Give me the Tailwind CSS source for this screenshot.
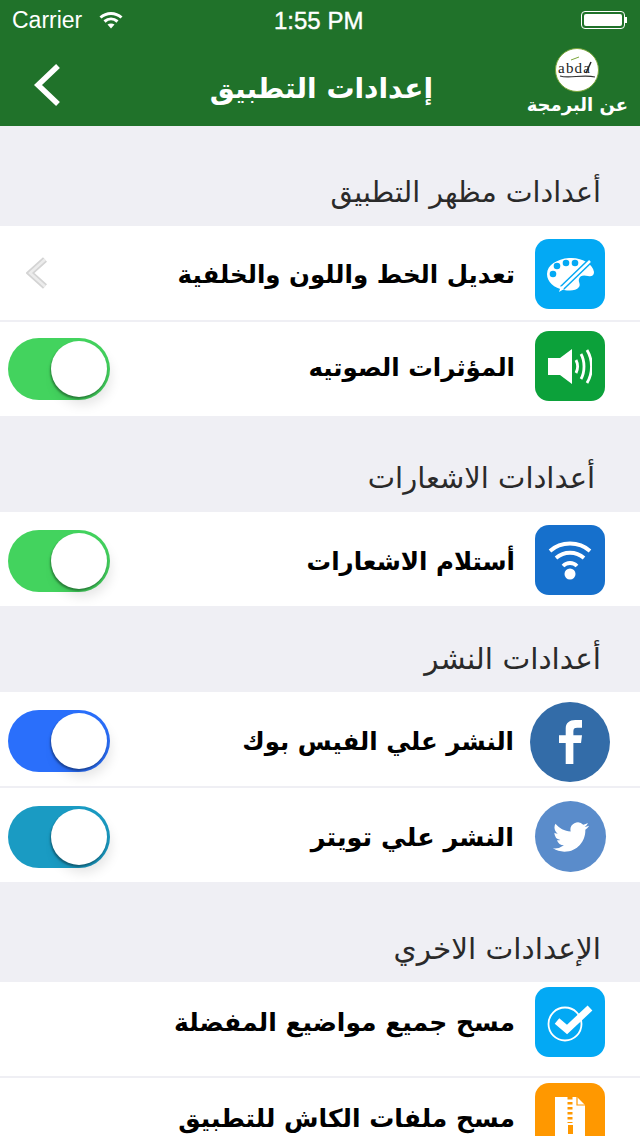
<!DOCTYPE html>
<html lang="ar">
<head>
  <meta charset="UTF-8">
  <title>إعدادات التطبيق</title>
  <script src="https://cdn.jsdelivr.net/npm/@tailwindcss/browser@4"></script>
</head>
<body class="w-[640px] h-[1136px] overflow-hidden bg-[#efeff4] font-['DejaVu_Sans',sans-serif]">

  <!-- status bar + nav -->
  <header class="h-[126px] bg-[#20722a] text-white">
    <div class="relative h-[40px] flex items-center justify-between pl-[12px] pr-[13px] font-['Liberation_Sans',sans-serif] text-[23px]">
      <div class="flex items-center gap-[17px]">
        <span>Carrier</span>
        <svg class="w-[24px] h-[18px]" viewBox="0 0 24 18" fill="none" stroke="#fff" stroke-width="3">
          <path d="M1.500 6.500C7.500 1 16.500 1 22.500 6.500"/>
          <path d="M5.500 10.500C9.500 7 14.500 7 18.500 10.500"/>
          <path d="M12 17.500L8.500 13.500C10.500 12 13.500 12 15.500 13.500Z" fill="#fff" stroke="none"/>
        </svg>
      </div>
      <span class="absolute left-[274px] top-[3px] text-[24px] [-webkit-text-stroke:0.4px_white]">1:55 PM</span>
      <div class="flex items-center">
        <div class="w-[44px] h-[18px] rounded-[4px] border border-white p-[2px]"><div class="w-full h-full rounded-[2px] bg-white"></div></div>
        <div class="w-[2px] h-[6px] bg-white"></div>
      </div>
    </div>
    <div class="h-[86px] flex items-center justify-between pl-[32px] pr-[12px]">
      <svg class="w-[30px] h-[44px] mt-[4px]" viewBox="0 0 30 44" fill="none" stroke="#fff" stroke-width="5.500">
        <path d="M26 3L6 22L26 41"/>
      </svg>
      <h1 class="ml-[54px] text-[28px] leading-none font-bold pt-[12px]">إعدادات التطبيق</h1>
      <div class="flex flex-col items-center pb-[1px]">
        <svg class="w-[44px] h-[44px]" viewBox="0 0 44 44" fill="none">
          <circle cx="22" cy="22" r="21.500" fill="#fff" stroke="#7ba63a"/>
          <text x="3" y="25" font-family="Liberation Serif, serif" font-size="15" textLength="32" fill="#222">abda</text>
          <path d="M36 14L31 25" stroke="#222" stroke-width="1.500"/>
          <path d="M5 28C14 31 28 26 40 29" stroke="#333" stroke-width="1.200"/>
          <path d="M16 12L24 9" stroke="#7ba63a"/>
        </svg>
        <span class="text-[18px] leading-[26px] font-bold">عن البرمجة</span>
      </div>
    </div>
  </header>

  <main>
    <!-- مظهر -->
    <div class="h-[100px] flex items-center justify-end pt-[34px] pr-[39px] text-[28.500px] text-[#2a2a2a]">أعدادات مظهر التطبيق</div>
    <div class="h-[94px] bg-white flex items-center justify-between pl-[26px] pr-[35px]">
      <svg class="w-[26px] h-[34px]" viewBox="0 0 26 34" fill="none">
        <path d="M19 3.500L4 17L19 30.500" stroke="#d4d4d4" stroke-width="6"/>
        <path d="M19 3.500L4 17L19 30.500" stroke="#ececec" stroke-width="2.500"/>
      </svg>
      <div class="flex items-center gap-[20px]">
        <span class="text-[24.500px] font-bold text-black mt-[4px]">تعديل الخط واللون والخلفية</span>
        <div class="w-[70px] h-[70px] mt-[1px] rounded-[14px] bg-[#03a9f4]">
          <svg class="w-[70px] h-[70px]" viewBox="0 0 70 70">
            <path fill="#fff" d="M34 19C47 18 58 25 59 33c0 4-3 5-6 4-4-1-8-1-9 3-1 3 2 5 0 8-3 4-9 4-15 3C19 49 12 43 12 35 12 26 22 20 34 19Z"/>
            <circle cx="18" cy="35" r="3.300" fill="#03a9f4"/><circle cx="22" cy="27" r="3.300" fill="#03a9f4"/><circle cx="31" cy="24" r="3.300" fill="#03a9f4"/><circle cx="40" cy="24" r="3.300" fill="#03a9f4"/>
            <path d="M55 22L27 49" stroke="#03a9f4" stroke-width="5.500"/>
            <path d="M55 22L27 49" stroke="#fff" stroke-width="2.500"/>
            <path d="M26 47l3 3-5 3z" fill="#fff"/>
          </svg>
        </div>
      </div>
    </div>
    <div class="h-[94px] mt-[2px] bg-white flex items-center justify-between pl-[8px] pr-[35px]">
      <div class="relative w-[102px] h-[62px] rounded-full bg-[#43d35e]">
        <div class="absolute left-[43px] top-[3px] w-[56px] h-[56px] rounded-full bg-white shadow-[-1px_2px_2px_rgba(0,0,0,0.35),4px_8px_12px_rgba(0,0,0,0.1)]"></div>
      </div>
      <div class="flex items-center gap-[20px] mb-[6px]">
        <span class="text-[24.500px] font-bold text-black mt-[4px]">المؤثرات الصوتيه</span>
        <div class="w-[70px] h-[70px] rounded-[14px] bg-[#0ca13a] flex items-center justify-center">
          <svg class="w-[44px] h-[35px]" viewBox="0 0 44 35" fill="none">
            <path fill="#fff" d="M0 9h12L24 0v35L12 26H0Z"/>
            <path stroke="#fff" stroke-width="2.800" d="M28 11c2 4 2 9 0 13M33 5c4 7 4 18 0 25M39 1c6 10 6 23 0 33"/>
          </svg>
        </div>
      </div>
    </div>

    <!-- الاشعارات -->
    <div class="h-[96px] flex items-center justify-end pt-[30px] pr-[45px] text-[29px] text-[#2a2a2a]">أعدادات الاشعارات</div>
    <div class="h-[94px] pt-[3px] bg-white flex items-center justify-between pl-[8px] pr-[35px]">
      <div class="relative w-[102px] h-[62px] rounded-full bg-[#43d35e]">
        <div class="absolute left-[43px] top-[3px] w-[56px] h-[56px] rounded-full bg-white shadow-[-1px_2px_2px_rgba(0,0,0,0.35),4px_8px_12px_rgba(0,0,0,0.1)]"></div>
      </div>
      <div class="flex items-center gap-[20px]">
        <span class="text-[24.500px] font-bold text-black mt-[4px]">أستلام الاشعارات</span>
        <div class="w-[70px] h-[70px] mb-[2px] rounded-[14px] bg-[#1670cc]">
          <svg class="w-[70px] h-[70px]" viewBox="0 0 70 70" fill="none" stroke="#fff" stroke-width="3.800">
            <path d="M15 26C26 16 44 16 55 26"/>
            <path d="M21 33C29 26 41 26 49 33"/>
            <path d="M28 41C32 37 38 37 42 41"/>
            <circle cx="35" cy="49" r="5.500" fill="#fff" stroke="none"/>
          </svg>
        </div>
      </div>
    </div>

    <!-- النشر -->
    <div class="h-[86px] flex items-center justify-end pt-[20px] pr-[39px] text-[29.500px] text-[#2a2a2a]">أعدادات النشر</div>
    <div class="h-[94px] pt-[4px] bg-white flex items-center justify-between pl-[8px] pr-[30px]">
      <div class="relative w-[102px] h-[62px] rounded-full bg-[#2a6ffb]">
        <div class="absolute left-[43px] top-[3px] w-[56px] h-[56px] rounded-full bg-white shadow-[-1px_2px_2px_rgba(0,0,0,0.35),4px_8px_12px_rgba(0,0,0,0.1)]"></div>
      </div>
      <div class="flex items-center gap-[16px]">
        <span class="text-[24.500px] font-bold text-black mt-[2px]">النشر علي الفيس بوك</span>
        <div class="w-[80px] h-[80px] mt-[2px] rounded-full bg-[#336ca8] flex items-center justify-center">
          <svg class="w-[23px] h-[46px]" viewBox="0 0 24 46"><path fill="#fff" d="M7 46V24H0v-8h7v-7C7 3 11 0 17 0h7v8h-5c-3 0-4 1-4 4v4h9l-1 8h-8v22Z"/></svg>
        </div>
      </div>
    </div>
    <div class="h-[94px] pt-[3px] mt-[2px] bg-white flex items-center justify-between pl-[8px] pr-[34px]">
      <div class="relative w-[102px] h-[62px] rounded-full bg-[#1a9bc3]">
        <div class="absolute left-[43px] top-[3px] w-[56px] h-[56px] rounded-full bg-white shadow-[-1px_2px_2px_rgba(0,0,0,0.35),4px_8px_12px_rgba(0,0,0,0.1)]"></div>
      </div>
      <div class="flex items-center gap-[21px]">
        <span class="text-[25.500px] font-bold text-black mt-[2px]">النشر علي تويتر</span>
        <div class="w-[71px] h-[71px] rounded-full bg-[#5a8ccb] flex items-center justify-center">
          <svg class="w-[36px] h-[30px]" viewBox="0 0 24 20"><path fill="#fff" d="M23.953 2.570a10 10 0 01-2.825.775 4.958 4.958 0 002.163-2.723c-.951.555-2.005.959-3.127 1.184a4.920 4.920 0 00-8.384 4.482C7.690 6.095 4.067 4.130 1.640 1.162a4.822 4.822 0 00-.666 2.475c0 1.710.870 3.213 2.188 4.096a4.904 4.904 0 01-2.228-.616v.060a4.923 4.923 0 003.946 4.827 4.996 4.996 0 01-2.212.085 4.936 4.936 0 004.604 3.417 9.867 9.867 0 01-6.102 2.105c-.390 0-.779-.023-1.170-.067a13.995 13.995 0 007.557 2.209c9.053 0 13.998-7.496 13.998-13.985 0-.210 0-.420-.015-.630A9.935 9.935 0 0024 2.590z"/></svg>
        </div>
      </div>
    </div>

    <!-- الاخري -->
    <div class="h-[100px] flex items-center justify-end pt-[34px] pr-[39px] text-[29.500px] text-[#2a2a2a]">الإعدادات الاخري</div>
    <div class="h-[94px] pb-[14px] bg-white flex items-center justify-end pr-[35px] gap-[20px]">
      <span class="text-[25px] font-bold text-black mt-[2px]">مسح جميع مواضيع المفضلة</span>
      <div class="w-[70px] h-[70px] rounded-[14px] bg-[#03a9f4]">
        <svg class="w-[70px] h-[70px]" viewBox="0 0 70 70" fill="none">
          <circle cx="30" cy="37" r="16.500" stroke="#fff" stroke-width="1.800"/>
          <path d="M22 34l10 8.500L55 21" stroke="#fff" stroke-width="7"/>
        </svg>
      </div>
    </div>
    <div class="h-[58px] mt-[2px] bg-white flex items-start justify-end pt-[5px] pr-[35px] gap-[20px]">
      <span class="text-[25px] font-bold text-black mt-[17px]">مسح ملفات الكاش للتطبيق</span>
      <div class="w-[70px] h-[70px] shrink-0 rounded-[14px] bg-[#ff9800]">
        <svg class="w-[70px] h-[70px]" viewBox="0 0 70 70">
          <path fill="#fff" d="M20 14h22l8 8v40H20Z"/>
          <path stroke="#ff9800" stroke-width="5" stroke-dasharray="2.500 2.500" d="M35 14v26"/>
          <rect x="33" y="42" width="5" height="9" fill="#ff9800"/>
          <path d="M42 14v8h8" fill="none" stroke="#ff9800" stroke-width="1.200"/>
        </svg>
      </div>
    </div>
  </main>
</body>
</html>
